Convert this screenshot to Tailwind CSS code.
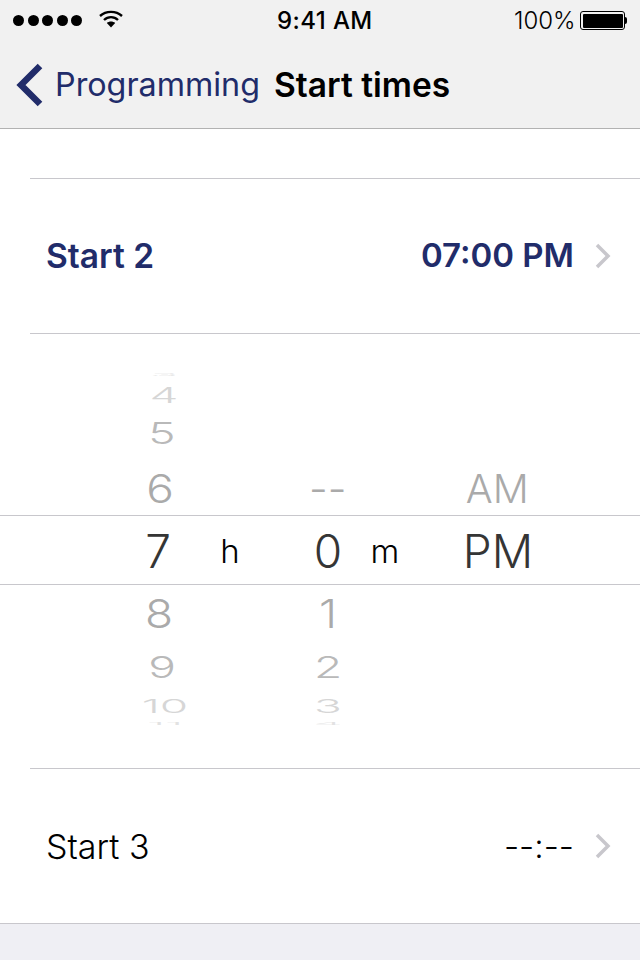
<!DOCTYPE html>
<html lang="en">
<head>
    <meta charset="UTF-8">
    <meta name="viewport" content="width=device-width, initial-scale=1.0">
    <title>Start times</title>
    <script src="https://cdn.jsdelivr.net/npm/@tailwindcss/browser@4"></script>
</head>
<body class="bg-[#efeff4] font-['Inter',sans-serif] h-[960px] w-[640px] overflow-hidden">
    <!-- status bar + nav -->
    <header class="bg-[#f1f1f1] border-b border-[#b2b2b2] h-[129px]">
        <div class="h-[40px] flex items-center relative text-black">
            <div class="flex gap-[3.5px] ml-[13px]">
                <span class="w-[11px] h-[11px] rounded-full bg-black"></span>
                <span class="w-[11px] h-[11px] rounded-full bg-black"></span>
                <span class="w-[11px] h-[11px] rounded-full bg-black"></span>
                <span class="w-[11px] h-[11px] rounded-full bg-black"></span>
                <span class="w-[11px] h-[11px] rounded-full bg-black"></span>
            </div>
            <svg class="ml-[17px] mb-[3px]" width="24" height="18" viewBox="0 0 24 18" fill="none" stroke="black" stroke-width="2.4">
                <path d="M1 6 C7 0.5 17 0.5 23 6"/>
                <path d="M5 10 C9 6.2 15 6.2 19 10"/>
                <path d="M12 17.5 L7.8 13 C10 11 14 11 16.2 13 Z" fill="black" stroke="none"/>
            </svg>
            <span class="absolute left-[277px] top-[8px] text-[24px] leading-[26px] font-medium tracking-[0.4px]">9:41 AM</span>
            <span class="absolute left-[514px] top-[8px] text-[24px] leading-[26px] font-light">100%</span>
            <div class="absolute left-[580px] top-[11px] flex items-center">
                <div class="w-[45px] h-[19px] rounded-[3px] border border-black p-[1.5px]">
                    <div class="w-full h-full bg-black rounded-[1px]"></div>
                </div>
                <div class="w-[2px] h-[7px] bg-black rounded-r-[2px]"></div>
            </div>
        </div>
        <div class="h-[88px] flex items-center">
            <svg class="ml-[16px] mt-[2px]" width="27" height="44" viewBox="0 0 27 44" fill="none" stroke="#212c6a" stroke-width="6.5">
                <path d="M24 3 L5 22 L24 41"/>
            </svg>
            <span class="ml-[12px] mt-[2px] text-[#212c6a] text-[32.3px] leading-[40px]">Programming</span>
            <span class="ml-[14px] mt-[1px] text-black text-[33.5px] leading-[40px] font-semibold">Start times</span>
        </div>
    </header>

    <main class="bg-white h-[795px] border-b border-[#c8c7cc]">
        <div class="h-[49px]"></div>
        <div class="ml-[30px] border-t border-[#c8c7cc] h-[155px] pl-[16px] pr-[29px] flex items-center justify-between text-[#212c6a] font-semibold">
            <span class="text-[33.5px]">Start 2</span>
            <div class="flex items-center gap-[21px]">
                <span class="text-[33px]">07:00 PM</span>
                <svg width="16" height="26" viewBox="0 0 16 26" fill="none" stroke="#c8c7cc" stroke-width="3.5"><path d="M2 2 L13 13 L2 24"/></svg>
            </div>
        </div>

        <!-- time picker wheel -->
        <div class="ml-[30px] border-t border-[#c8c7cc]"></div>
        <div class="relative h-[434px] flex pt-[34px] font-light text-[46px] leading-none text-center opacity-[0.99]">
            <div class="absolute left-0 right-0 top-[181px] h-[70px] border-y border-[#c8c7cc]"></div>
            <div class="ml-[118px] w-[80px] flex flex-col items-center">
                <div class="h-[14px] flex items-center text-[#e2e2e2] translate-x-[6px] scale-y-[0.08]">3</div>
                <div class="h-[26px] flex items-center text-[#d6d6d6] translate-x-[6px] scale-y-[0.45]">4</div>
                <div class="h-[50px] flex items-center text-[#b9b9b9] translate-x-[4px] scale-y-[0.66]">5</div>
                <div class="h-[60px] flex items-center text-[#aaaaaa] translate-x-[2px] scale-y-[0.86]">6</div>
                <div class="h-[66px] flex items-center text-[#333333]">7</div>
                <div class="h-[58px] flex items-center text-[#aaaaaa] translate-x-[1px] scale-y-[0.86]">8</div>
                <div class="h-[50px] flex items-center text-[#b9b9b9] translate-x-[4px] scale-y-[0.66]">9</div>
                <div class="h-[27px] flex items-center text-[#d6d6d6] translate-x-[7px] scale-y-[0.42]">10</div>
                <div class="h-[10px] flex items-center text-[#e2e2e2] translate-x-[7px] scale-y-[0.08]">11</div>
            </div>
            <div class="w-[64px] pt-[150px] h-full">
                <div class="h-[66px] flex items-center justify-center text-[33px] font-light text-black">h</div>
            </div>
            <div class="ml-[26px] w-[80px] flex flex-col items-center pt-[90px]">
                <div class="h-[60px] flex items-center text-[#aaaaaa] scale-x-[0.9] scale-y-[0.86]">--</div>
                <div class="h-[66px] flex items-center text-[#333333]">0</div>
                <div class="h-[58px] flex items-center text-[#aaaaaa] scale-y-[0.86]">1</div>
                <div class="h-[50px] flex items-center text-[#b9b9b9] scale-y-[0.66]">2</div>
                <div class="h-[27px] flex items-center text-[#d6d6d6] scale-y-[0.42]">3</div>
                <div class="h-[10px] flex items-center text-[#e2e2e2] scale-y-[0.08]">4</div>
            </div>
            <div class="w-[34px] pt-[150px] h-full">
                <div class="h-[66px] flex items-center justify-center text-[33px] font-light text-black">m</div>
            </div>
            <div class="ml-[55px] w-[80px] flex flex-col items-center pt-[90px]">
                <div class="h-[60px] flex items-center text-[#aaaaaa] scale-x-[0.87] scale-y-[0.86]">AM</div>
                <div class="h-[66px] flex items-center text-[#333333] translate-x-[1px]">PM</div>
            </div>
        </div>

        <div class="ml-[30px] border-t border-[#c8c7cc] h-[155px] pl-[16px] pr-[29px] flex items-center justify-between text-black">
            <span class="text-[34px] font-light">Start 3</span>
            <div class="flex items-center gap-[21px]">
                <span class="text-[33.5px] font-light">--:--</span>
                <svg width="16" height="26" viewBox="0 0 16 26" fill="none" stroke="#c8c7cc" stroke-width="3.5"><path d="M2 2 L13 13 L2 24"/></svg>
            </div>
        </div>
    </main>
</body>
</html>
